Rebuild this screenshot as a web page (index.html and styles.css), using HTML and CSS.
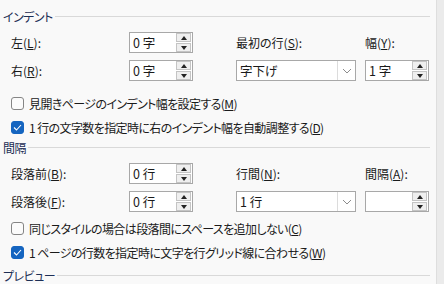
FILE: index.html
```html
<!DOCTYPE html>
<html lang="ja">
<head>
    <meta charset="UTF-8">
    <title>段落</title>
    <link rel="stylesheet" href="styles.css">
</head>
<body>
    <div class="dialog">
        <div class="pane">
            <!-- インデント -->
            <div class="group-title first"><span>インデント</span><div class="rule"></div></div>
            <div class="fields">
                <label class="lbl">左(<u>L</u>):</label>
                <div class="spin">
                    <span class="val">0 字</span>
                    <div class="spin-btns"><span class="btn"><i class="up"></i></span><span class="btn"><i class="down"></i></span></div>
                </div>
                <label class="lbl">最初の行(<u>S</u>):</label>
                <label class="lbl">幅(<u>Y</u>):</label>

                <label class="lbl">右(<u>R</u>):</label>
                <div class="spin">
                    <span class="val">0 字</span>
                    <div class="spin-btns"><span class="btn"><i class="up"></i></span><span class="btn"><i class="down"></i></span></div>
                </div>
                <div class="combo">
                    <span class="val">字下げ</span>
                    <span class="arrow"><svg width="10" height="6" viewBox="0 0 10 6"><polyline points="1,1 5,5 9,1" fill="none" stroke="#8c8c8c" stroke-width="1"/></svg></span>
                </div>
                <div class="spin">
                    <span class="val">1 字</span>
                    <div class="spin-btns"><span class="btn"><i class="up"></i></span><span class="btn"><i class="down"></i></span></div>
                </div>
            </div>
            <div class="checks top">
                <div class="check"><span class="box"></span>見開きページのインデント幅を設定する(<u>M</u>)</div>
                <div class="check"><span class="box on"><svg width="9" height="7" viewBox="0 0 9 7"><polyline points="1,3.5 3.5,6 8,1" fill="none" stroke="#fff" stroke-width="1.1"/></svg></span>1&nbsp;行の文字数を指定時に右のインデント幅を自動調整する(<u>D</u>)</div>
            </div>

            <!-- 間隔 -->
            <div class="group-title"><span>間隔</span><div class="rule"></div></div>
            <div class="fields">
                <label class="lbl">段落前(<u>B</u>):</label>
                <div class="spin">
                    <span class="val">0 行</span>
                    <div class="spin-btns"><span class="btn"><i class="up"></i></span><span class="btn"><i class="down"></i></span></div>
                </div>
                <label class="lbl">行間(<u>N</u>):</label>
                <label class="lbl">間隔(<u>A</u>):</label>

                <label class="lbl">段落後(<u>F</u>):</label>
                <div class="spin">
                    <span class="val">0 行</span>
                    <div class="spin-btns"><span class="btn"><i class="up"></i></span><span class="btn"><i class="down"></i></span></div>
                </div>
                <div class="combo">
                    <span class="val">1 行</span>
                    <span class="arrow"><svg width="10" height="6" viewBox="0 0 10 6"><polyline points="1,1 5,5 9,1" fill="none" stroke="#8c8c8c" stroke-width="1"/></svg></span>
                </div>
                <div class="spin">
                    <span class="val"></span>
                    <div class="spin-btns"><span class="btn"><i class="up"></i></span><span class="btn"><i class="down"></i></span></div>
                </div>
            </div>
            <div class="checks bottom">
                <div class="check"><span class="box"></span>同じスタイルの場合は段落間にスペースを追加しない(<u>C</u>)</div>
                <div class="check"><span class="box on"><svg width="9" height="7" viewBox="0 0 9 7"><polyline points="1,3.5 3.5,6 8,1" fill="none" stroke="#fff" stroke-width="1.1"/></svg></span>1&nbsp;ページの行数を指定時に文字を行グリッド線に合わせる(<u>W</u>)</div>
            </div>

            <!-- プレビュー -->
            <div class="group-title preview"><span>プレビュー</span><div class="rule"></div></div>
        </div>
        <div class="scroll-edge"></div>
    </div>
</body>
</html>
```

FILE: styles.css
```css
/* ダイアログ全体 */
body {
    margin: 0;
    background: #f9f9f9;
    font-family: "Noto Sans CJK JP", "Noto Sans", sans-serif;
    font-size: 12px;
    color: #1a1a1a;
    font-feature-settings: "palt";
}

.dialog {
    display: flex;
    width: 444px;
    height: 284px;
    overflow: hidden;
}

.pane {
    flex: 1;
    padding-left: 3px;
}

/* 右端のグレーの帯 */
.scroll-edge {
    width: 7px;
    background: #ebebeb;
    border-left: 1px solid #dedede;
}

/* グループ見出し */
.group-title {
    display: flex;
    align-items: center;
    gap: 2px;
    height: 16px;
    color: #1d2f55;
    letter-spacing: -0.5px;
}

.group-title.first {
    margin-top: 8px;
}

.group-title .rule {
    flex: 1;
    height: 1px;
    background: #d9d9d9;
    margin-right: 6px;
}

.group-title.preview {
    margin-top: 3px;
}

/* 入力欄のグリッド */
.fields {
    display: grid;
    grid-template-columns: 118px 107px 129px 65px;
    grid-auto-rows: 21px;
    row-gap: 7px;
    margin: 8px 0 0 8px;
}

.lbl {
    display: flex;
    align-items: center;
    white-space: nowrap;
}

.spin,
.combo {
    display: flex;
    align-items: center;
    box-sizing: border-box;
    background: #fff;
    border: 1px solid #a8a8a8;
    height: 21px;
}

.spin {
    width: 64px;
}

.combo {
    width: 120px;
}

.val {
    flex: 1;
    padding-left: 3px;
    font-size: 12.5px;
}

/* スピンボタン */
.spin-btns {
    display: flex;
    flex-direction: column;
    gap: 1px;
    width: 15px;
    height: 19px;
    margin-right: 1px;
}

.spin-btns .btn {
    flex: 1;
    display: flex;
    align-items: center;
    justify-content: center;
    box-sizing: border-box;
    border: 1px solid #c4c4c4;
    background: #efefef;
}

.up {
    border-left: 3px solid transparent;
    border-right: 3px solid transparent;
    border-bottom: 4px solid #222;
}

.down {
    border-left: 3px solid transparent;
    border-right: 3px solid transparent;
    border-top: 4px solid #222;
}

/* コンボボックスの矢印部分 */
.combo .arrow {
    display: flex;
    align-items: center;
    justify-content: center;
    width: 17px;
    height: 19px;
    border-left: 1px solid #dcdcdc;
}

/* チェックボックス */
.checks {
    letter-spacing: -0.6px;
}

.checks.top {
    margin: 10px 0 0 8px;
}

.checks.bottom {
    margin: 4px 0 0 8px;
}

.check {
    display: flex;
    align-items: center;
    height: 24px;
    white-space: nowrap;
}

.box {
    display: flex;
    align-items: center;
    justify-content: center;
    box-sizing: border-box;
    width: 13px;
    height: 13px;
    margin-right: 5px;
    border: 1px solid #858585;
    border-radius: 3px;
    background: #fbfbfb;
}

.box.on {
    background: #1565c0;
    border-color: #1565c0;
}
```
